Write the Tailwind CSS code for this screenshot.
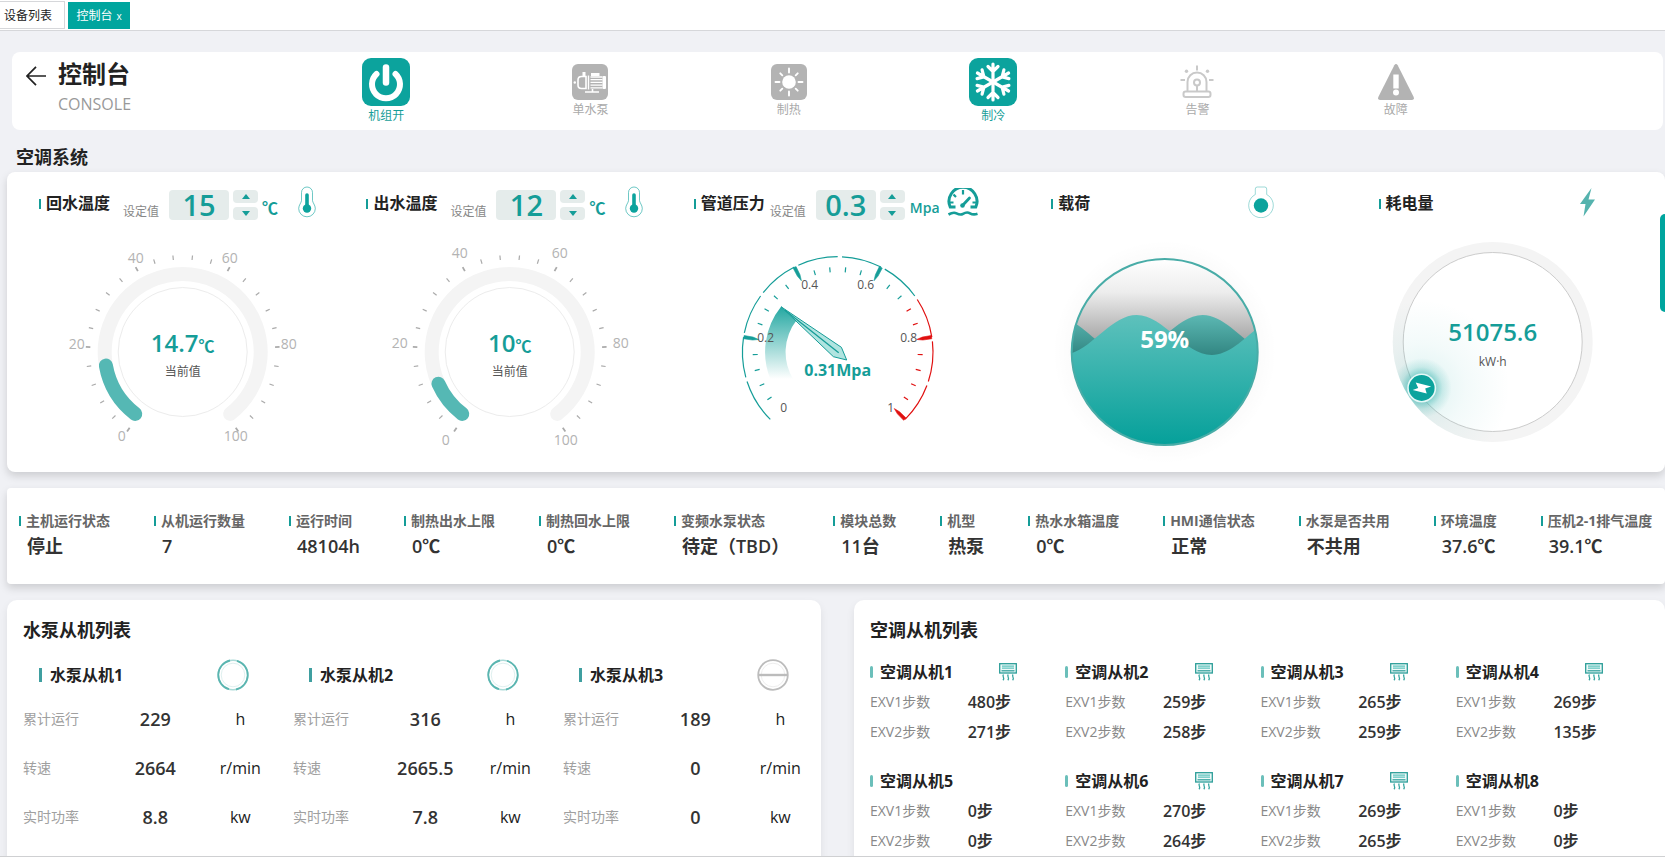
<!DOCTYPE html>
<html lang="zh-CN">
<head>
<meta charset="utf-8">
<meta name="viewport" content="width=device-width, initial-scale=1">
<title>控制台</title>
<script src="https://cdn.jsdelivr.net/npm/@tailwindcss/browser@4"></script>
</head>
<body class="flex h-screen flex-col overflow-hidden bg-[#f0f1f5] font-['Open_Sans','Noto_Sans_CJK_SC',sans-serif] text-[#222]">

<!-- Shared symbols -->
<svg class="hidden" aria-hidden="true">
  <symbol id="thermo" viewBox="0 0 18 32">
    <path d="M3.5 14.5V6.5a5.5 5.5 0 0 1 11 0v8c0 2 2.8 4.600 2.800 8a8.300 8.300 0 0 1-16.600 0c0-3.400 2.800-6 2.800-8z" fill="none" stroke="#0ca39d" stroke-opacity=".75" stroke-width=".8"/>
    <path d="M9 9v13" stroke="#0ca39d" stroke-width="3.600" stroke-linecap="round"/>
    <circle cx="9" cy="22.500" r="4.200" fill="#0ca39d"/>
  </symbol>
  <symbol id="up" viewBox="0 0 8 5"><path d="M4 0l4 5H0z" fill="#159d98"/></symbol>
  <symbol id="down" viewBox="0 0 8 5"><path d="M4 5l4-5H0z" fill="#159d98"/></symbol>
  <symbol id="ac" viewBox="0 0 18 18">
    <rect x=".7" y=".7" width="16.600" height="9.300" fill="#eef9f8" stroke="#2a9d98" stroke-width="1.300"/>
    <path d="M3 3.200h12M3 5.200h12" stroke="#5fc3bd" stroke-width="1.200"/>
    <path d="M2.500 7.800h13" stroke="#2a9d98" stroke-width="1.200"/>
    <path d="M4.500 11.500c-2 2 2 3-.5 5.800M9.300 11.500c-2 2 2 3-.5 5.800M14.100 11.500c-2 2 2 3-.5 5.800" fill="none" stroke="#36a5a0" stroke-width="1.300"/>
  </symbol>
  <symbol id="ring-on" viewBox="0 0 32 32">
    <circle cx="16" cy="16" r="14.800" fill="#fff" stroke="#a9d9d6" stroke-width="1.600"/>
    <path d="M13 1.500A14.800 14.800 0 0 0 12 30.200M19 30.500A14.800 14.800 0 0 0 20 1.800" fill="none" stroke="#5ab5b0" stroke-width="1.800"/>
    <circle cx="16" cy="16" r="11.800" fill="none" stroke="#dff0ef" stroke-width="1"/>
  </symbol>
  <symbol id="ring-off" viewBox="0 0 32 32">
    <circle cx="16" cy="16" r="14.800" fill="#fff" stroke="#bcbcbc" stroke-width="1.800"/>
    <circle cx="16" cy="16" r="11.800" fill="none" stroke="#eee" stroke-width="1"/>
    <path d="M1.500 16h29" stroke="#bcbcbc" stroke-width="2.400"/>
  </symbol>
</svg>

<nav class="flex h-[31px] shrink-0 items-start gap-[3px] border-b border-[#d6d7da] bg-white pt-px text-xs">
  <a href="#" class="flex h-7 w-[65px] items-center border border-l-0 border-[#d6d7da] pt-px pl-1 leading-4">设备列表</a>
  <a href="#" class="mt-px flex h-[27px] w-[62px] items-center justify-center gap-1 bg-[#00a59e] leading-4 text-white">控制台 <span class="text-[10px]">x</span></a>
</nav>

<main class="relative min-h-0 flex-1 overflow-hidden pt-[21px]">

  <header class="mr-0.5 ml-3 flex h-[78px] rounded-lg bg-white">
    <div class="flex w-[269px] shrink-0 pl-3.5 pt-1">
      <button type="button" aria-label="返回" class="mt-2.5 h-5 w-5">
        <svg viewBox="0 0 20 20" class="h-5 w-5"><path d="M20 10H1M10 .8L1 10l9 9.200" fill="none" stroke="#222" stroke-width="1.700"/></svg>
      </button>
      <div class="ml-3">
        <h1 class="text-2xl leading-9 font-bold">控制台</h1>
        <p class="text-base leading-6 text-[#999]">CONSOLE</p>
      </div>
    </div>
    <ul class="mr-[168px] flex flex-1 justify-around pt-1.5 text-xs leading-5 text-[#aaa]">
      <li class="flex w-12 flex-col items-center text-[#159d98]">
        <svg viewBox="0 0 48 48" class="h-12 w-12"><rect width="48" height="48" rx="9" fill="#0ca39d"/><path d="M14.500 16a14 14 0 1 0 19 0" fill="none" stroke="#fff" stroke-width="6" stroke-linecap="round"/><path d="M24 9.500v15" stroke="#fff" stroke-width="6.500" stroke-linecap="round"/></svg>
        机组开
      </li>
      <li class="flex w-9 flex-col items-center pt-1.5">
        <svg viewBox="0 0 36 36" class="h-9 w-9"><rect width="36" height="36" rx="6" fill="#b3b3b3"/><path d="M14 12.500H9.500C7.500 12.500 6 14 6 16v5c0 2 1.500 3.500 3.500 3.500H14z" fill="#b3b3b3" stroke="#fff" stroke-width="1.600"/><circle cx="2.800" cy="18.500" r="1.200" fill="#fff"/><path d="M12 8v4" stroke="#fff" stroke-width="3"/><path d="M16.500 11.500v14" stroke="#fff" stroke-width="1.400"/><rect x="19" y="9" width="8.500" height="3" fill="#fff"/><path d="M18.500 13h12M18.500 15.700h12M18.500 18.400h12M18.500 21.100h12M18.500 23.800h12" stroke="#fff" stroke-width="1.300"/><rect x="30.500" y="12" width="3.500" height="13" rx="1" fill="#fff"/><path d="M20.500 25v3M13 28h14" stroke="#fff" stroke-width="1.600"/></svg>
        单水泵
      </li>
      <li class="flex w-9 flex-col items-center pt-1.5">
        <svg viewBox="0 0 36 36" class="h-9 w-9"><rect width="36" height="36" rx="6" fill="#b3b3b3"/><circle cx="18" cy="18" r="6.800" fill="#fff"/><path d="M18 4.500v4M18 27.500v4M4.500 18h4M27.500 18h4M9.300 9.300l2 2M24.700 24.700l2 2M9.300 26.700l2-2M24.700 11.300l2-2" stroke="#fff" stroke-width="1.900" stroke-linecap="round"/></svg>
        制热
      </li>
      <li class="flex w-12 flex-col items-center text-[#159d98]">
        <svg viewBox="-24 -24 48 48" class="h-12 w-12"><rect x="-24" y="-24" width="48" height="48" rx="9" fill="#0ca39d"/><g id="flake" fill="none" stroke="#fff" stroke-width="3.200" stroke-linecap="round"></g></svg>
        制冷
      </li>
      <li class="flex w-9 flex-col items-center pt-1.5">
        <svg viewBox="0 0 36 36" class="h-9 w-9"><g fill="none" stroke="#c9c9c9" stroke-width="2"><path d="M8.500 27V18a9.500 9.500 0 0 1 19 0v9"/><rect x="4.500" y="27.500" width="27" height="5.500" rx="2.200"/><circle cx="18" cy="18.500" r="3"/><path d="M18 21.500V27M18 1.500V6.500M1.500 16H6M30 16h4.500"/></g><circle cx="7.500" cy="7.300" r="1.700" fill="#c9c9c9"/><circle cx="28.500" cy="7.300" r="1.700" fill="#c9c9c9"/></svg>
        告警
      </li>
      <li class="flex w-9 flex-col items-center pt-1.5">
        <svg viewBox="0 0 36 36" class="h-9 w-9"><path d="M16.300 1.200Q18-1 19.700 1.200L35.700 33Q36.500 36 34 36H2Q-.5 36 .3 33z" fill="#b3b3b3"/><path d="M15.300 10.500h5.400v14h-5.400z" fill="#fff"/><circle cx="18" cy="28.500" r="3" fill="#fff"/></svg>
        故障
      </li>
    </ul>
  </header>

  <h2 class="mt-3.5 ml-4 pb-0.5 text-lg leading-[26px] font-bold">空调系统</h2>

  <section class="ml-[7px] grid h-[300px] grid-cols-5 rounded-lg bg-white pt-[18px] pr-[9px] pl-3 shadow-[0_4px_8px_rgba(0,0,0,0.15)]">
    <!-- Return water -->
    <article>
      <div class="flex h-[30px] items-center pl-5">
        <i class="mb-0.5 h-2.5 w-0.5 bg-[#159d98]"></i>
        <h3 class="mb-1 ml-[5px] text-base leading-6 font-bold">回水温度</h3>
        <label for="set1" class="mt-3.5 ml-[13px] text-xs leading-4 text-[#888]">设定值</label>
        <input id="set1" value="15" class="ml-2.5 h-[30px] w-[60px] rounded bg-[#e5eceb] text-center text-[29px] leading-[30px] font-semibold text-[#159d98]">
        <span class="ml-1 flex flex-col gap-1">
          <button type="button" aria-label="增加" class="flex h-[13px] w-[25px] items-center justify-center rounded bg-[#e5eceb]"><svg class="h-[5px] w-2"><use href="#up"/></svg></button>
          <button type="button" aria-label="减少" class="flex h-[13px] w-[25px] items-center justify-center rounded bg-[#e5eceb]"><svg class="h-[5px] w-2"><use href="#down"/></svg></button>
        </span>
        <span class="mt-1.5 ml-1 text-base leading-5 font-bold text-[#159d98]">℃</span>
        <svg class="mb-1.5 ml-5 h-8 w-[18px]"><use href="#thermo"/></svg>
      </div>
      <svg viewBox="-160 -132 320 252" class="h-[252px] w-full" data-dial="190" data-labels="0,-61,84;20,-106,-8;40,-47,-94;60,47,-94;80,106,-8;100,53,84">
        <g class="dial"></g>
        <text y="0" text-anchor="middle" class="fill-[#159d98] text-2xl font-semibold">14.7<tspan class="text-base">℃</tspan></text>
        <text y="24" text-anchor="middle" class="fill-[#555] text-xs">当前值</text>
      </svg>
    </article>
    <!-- Outlet water -->
    <article>
      <div class="flex h-[30px] items-center pl-5">
        <i class="mb-0.5 h-2.5 w-0.5 bg-[#159d98]"></i>
        <h3 class="mb-1 ml-[5px] text-base leading-6 font-bold">出水温度</h3>
        <label for="set2" class="mt-3.5 ml-[13px] text-xs leading-4 text-[#888]">设定值</label>
        <input id="set2" value="12" class="ml-2.5 h-[30px] w-[60px] rounded bg-[#e5eceb] text-center text-[29px] leading-[30px] font-semibold text-[#159d98]">
        <span class="ml-1 flex flex-col gap-1">
          <button type="button" aria-label="增加" class="flex h-[13px] w-[25px] items-center justify-center rounded bg-[#e5eceb]"><svg class="h-[5px] w-2"><use href="#up"/></svg></button>
          <button type="button" aria-label="减少" class="flex h-[13px] w-[25px] items-center justify-center rounded bg-[#e5eceb]"><svg class="h-[5px] w-2"><use href="#down"/></svg></button>
        </span>
        <span class="mt-1.5 ml-1 text-base leading-5 font-bold text-[#159d98]">℃</span>
        <svg class="mb-1.5 ml-5 h-8 w-[18px]"><use href="#thermo"/></svg>
      </div>
      <svg viewBox="-160 -132 320 252" class="h-[252px] w-full" data-dial="204" data-labels="0,-64,88;20,-110,-9;40,-50,-99;60,50,-99;80,111,-9;100,56,88">
        <g class="dial"></g>
        <text y="0" text-anchor="middle" class="fill-[#159d98] text-2xl font-semibold">10<tspan class="text-base">℃</tspan></text>
        <text y="24" text-anchor="middle" class="fill-[#555] text-xs">当前值</text>
      </svg>
    </article>
    <!-- Pipe pressure -->
    <article>
      <div class="flex h-[30px] items-center pl-5">
        <i class="mb-0.5 h-2.5 w-0.5 bg-[#159d98]"></i>
        <h3 class="mb-1 ml-[5px] text-base leading-6 font-bold">管道压力</h3>
        <label for="set3" class="mt-3.5 ml-[5px] text-xs leading-4 text-[#888]">设定值</label>
        <input id="set3" value="0.3" class="ml-2.5 h-[30px] w-[60px] rounded bg-[#e5eceb] text-center text-[29px] leading-[30px] font-semibold text-[#159d98]">
        <span class="ml-1 flex flex-col gap-1">
          <button type="button" aria-label="增加" class="flex h-[13px] w-[25px] items-center justify-center rounded bg-[#e5eceb]"><svg class="h-[5px] w-2"><use href="#up"/></svg></button>
          <button type="button" aria-label="减少" class="flex h-[13px] w-[25px] items-center justify-center rounded bg-[#e5eceb]"><svg class="h-[5px] w-2"><use href="#down"/></svg></button>
        </span>
        <span class="mt-1.5 ml-[5px] text-sm leading-5 font-semibold text-[#159d98]">Mpa</span>
        <svg viewBox="0 0 32 28" class="mb-1.5 ml-[7px] h-7 w-8"><g fill="none" stroke="#159d98"><path d="M8.500 19H3.200A14 14 0 1 1 28.800 19H23.500" stroke-width="3"/><path d="M16 2v4.500M6.500 6.500l2.500 2.500M2 14.500h4.500M30 14.500h-4.500" stroke-width="2.200"/><path d="M15.500 17.500L22.500 10" stroke-width="2.800" stroke-linecap="round"/><path d="M1.500 26.500c3.500-2 5.500-2.500 8-1.200s4 2 6.500.5 4.500-2 7-.5 4.500 1.500 7.500.5" stroke-width="2.600"/></g><circle cx="15.500" cy="17.500" r="2.300" fill="#159d98"/></svg>
      </div>
      <svg viewBox="-160 -132 320 252" class="h-[252px] w-full">
        <defs><linearGradient id="band" gradientUnits="userSpaceOnUse" x1="0" y1="-46" x2="0" y2="27"><stop offset="0" stop-color="#22a7a1"/><stop offset="1" stop-color="#22a7a1" stop-opacity="0"/></linearGradient></defs>
        <path d="M-56.700-45.300A72.500 72.500 0 0 0-67 28L-44 28A52 52 0 0 1-41-32z" fill="url(#band)"/>
        <g id="pressure"></g>
        <path d="M-56.700-45.300L3.700-4.700 9 8-4.300 4.700z" fill="#b0e4e0" stroke="#159d98"/>
        <path d="M-53-42L1 .7" stroke="#159d98" stroke-width="1.300"/>
        <text y="24" text-anchor="middle" class="fill-[#159d98] text-base font-bold">0.31Mpa</text>
      </svg>
    </article>
    <!-- Load -->
    <article>
      <div class="flex h-[30px] items-center pr-[55px] pl-[50px]">
        <i class="mb-0.5 h-2.5 w-0.5 bg-[#159d98]"></i>
        <h3 class="mb-1 ml-[5px] text-base leading-6 font-bold">载荷</h3>
        <svg viewBox="0 0 26 32" class="mb-1.5 ml-auto h-8 w-[26px]"><path d="M7.300 8.500V3a2 2 0 0 1 2-2h7.400a2 2 0 0 1 2 2v5.500a12.300 12.300 0 1 1-11.400 0z" fill="none" stroke="#0ca39d" stroke-opacity=".5" stroke-width=".8"/><circle cx="13" cy="19.500" r="7.200" fill="#0ca39d"/></svg>
      </div>
      <svg viewBox="-160 -132 320 252" class="h-[252px] w-full">
        <defs>
          <clipPath id="ball"><circle r="93"/></clipPath>
          <radialGradient id="halo"><stop offset=".8" stop-color="#000" stop-opacity=".02"/><stop offset="1" stop-color="#000" stop-opacity="0"/></radialGradient>
          <linearGradient id="air" gradientUnits="userSpaceOnUse" x1="0" y1="-93" x2="0" y2="-10"><stop offset="0" stop-color="#fff"/><stop offset=".4" stop-color="#ededed"/><stop offset="1" stop-color="#a4a4a4"/></linearGradient>
          <linearGradient id="back" gradientUnits="userSpaceOnUse" x1="0" y1="-37" x2="0" y2="4"><stop offset="0" stop-color="#5cb8b3"/><stop offset="1" stop-color="#318581"/></linearGradient>
          <linearGradient id="front" gradientUnits="userSpaceOnUse" x1="0" y1="-37" x2="0" y2="93"><stop offset="0" stop-color="#5ec1bc"/><stop offset="1" stop-color="#05a09a"/></linearGradient>
        </defs>
        <circle r="112" fill="url(#halo)"/>
        <circle r="93" fill="url(#air)"/>
        <g clip-path="url(#ball)">
          <path d="M-112-37C-84.700-37-64.300 3-37 3S10.700-37 38-37 85.700 3 113 3V100H-112z" fill="url(#back)"/>
          <path d="M-103 3C-75.700 3-55.300-37-28-37S19.700 3 47 3 94.700-37 122-37V100H-103z" fill="url(#front)"/>
        </g>
        <circle r="93" fill="none" stroke="#48aca7" stroke-width="2"/>
        <text y="-4" text-anchor="middle" class="fill-white text-2xl font-bold">59%</text>
      </svg>
    </article>
    <!-- Energy -->
    <article>
      <div class="flex h-[30px] items-center pr-[55px] pl-[50px]">
        <i class="mb-0.5 h-2.5 w-0.5 bg-[#159d98]"></i>
        <h3 class="mb-1 ml-[5px] text-base leading-6 font-bold">耗电量</h3>
        <svg viewBox="0 0 28 30" class="mb-1.5 ml-auto h-[30px] w-7"><path d="M18.500 1L7 17h5.500L10.500 29.500 22 12.500h-6.500z" fill="#55b3ae"/></svg>
      </div>
      <svg viewBox="-160 -122 320 252" class="h-[252px] w-full">
        <defs>
          <clipPath id="disc"><circle r="100"/></clipPath>
          <radialGradient id="wide" gradientUnits="userSpaceOnUse" cx="-71" cy="46" r="88"><stop offset="0" stop-color="#0ca39d" stop-opacity=".14"/><stop offset=".5" stop-color="#0ca39d" stop-opacity=".05"/><stop offset="1" stop-color="#0ca39d" stop-opacity="0"/></radialGradient>
          <radialGradient id="near" gradientUnits="userSpaceOnUse" cx="-71" cy="46" r="30"><stop offset=".4" stop-color="#0ca39d" stop-opacity=".5"/><stop offset=".7" stop-color="#0ca39d" stop-opacity=".15"/><stop offset="1" stop-color="#0ca39d" stop-opacity="0"/></radialGradient>
        </defs>
        <circle r="100" fill="#f4f4f4"/>
        <circle r="89.500" fill="#fff" stroke="#ccc"/>
        <g clip-path="url(#disc)"><circle cx="-71" cy="46" r="88" fill="url(#wide)"/><circle cx="-71" cy="46" r="30" fill="url(#near)"/></g>
        <circle cx="-71" cy="46" r="13.700" fill="#0ca39d" stroke="#e6f8f7" stroke-width="1.600"/>
        <path d="M-77 40.500L-61.500 44.500-67.500 46.500-66 51.500-80 48-74.500 46z" fill="#fff"/>
        <text y="-1" text-anchor="middle" class="fill-[#159d98] text-2xl font-semibold">51075.6</text>
        <text y="24" text-anchor="middle" class="fill-[#555] text-xs">kW·h</text>
      </svg>
    </article>
  </section>

  <section id="stats" class="mt-4 ml-[7px] flex h-24 gap-11 overflow-hidden rounded bg-white pt-[21px] pl-3 whitespace-nowrap shadow-[0_4px_8px_rgba(0,0,0,0.15)]"></section>

  <div class="mt-4 ml-[7px] grid grid-cols-[814fr_811fr] gap-[33px]">
    <section class="h-[300px] rounded-[10px] bg-white pt-[15px] pl-4 shadow-[0_4px_8px_rgba(0,0,0,0.08)]">
      <h2 class="text-lg leading-[30px] font-bold">水泵从机列表</h2>
      <div id="pumps" class="mr-[-12px] grid grid-cols-3"></div>
    </section>
    <section class="h-[300px] rounded-[10px] bg-white pt-[15px] pl-4 shadow-[0_4px_8px_rgba(0,0,0,0.08)]">
      <h2 class="text-lg leading-[30px] font-bold">空调从机列表</h2>
      <div id="units" class="mr-3.5 grid grid-cols-4 pt-[15px]"></div>
    </section>
  </div>

  <button type="button" aria-label="展开侧栏" class="absolute top-[183px] right-0 h-[98px] w-[5px] rounded-l-lg bg-[#00a59e]"></button>
</main>
<footer class="h-0.5 shrink-0 border-t border-[#cfd0d2] bg-white"></footer>

<script>
const polar = (r, deg) => {
  const a = deg * Math.PI / 180;
  return [(r * Math.cos(a)).toFixed(2), (-r * Math.sin(a)).toFixed(2)];
};
const arc = (r, from, to) =>
  `M${polar(r, from)}A${r} ${r} 0 ${from - to > 180 ? 1 : 0} 1 ${polar(r, to)}`;

// Snowflake: six identical arms
document.getElementById('flake').innerHTML = [0, 60, 120, 180, 240, 300].map(a =>
  `<path d="M0 0V-18M-5-15.500L0-10.500 5-15.500" transform="rotate(${a})"/>`).join('');

// Temperature dials
document.querySelectorAll('[data-dial]').forEach(svg => {
  let h = `<path d="${arc(78, 232.5, -52.5)}" fill="none" stroke="#f4f4f4" stroke-width="14" stroke-linecap="round"/>
    <path d="${arc(78, 232.5, +svg.dataset.dial)}" fill="none" stroke="#55b8b4" stroke-width="14" stroke-linecap="round"/>
    <circle r="64.500" fill="none" stroke="#ececec"/>`;
  for (let i = 0; i <= 25; i++) {
    const a = 235 - i * 11.6;
    h += `<path d="M${polar(92.5, a)}L${polar(97, a)}" stroke="#aaa" stroke-width="${i % 5 ? 1.2 : 1.8}"/>`;
  }
  svg.dataset.labels.split(';').forEach(l => {
    const [t, x, y] = l.split(',');
    h += `<text x="${x}" y="${+y + 5}" text-anchor="middle" class="fill-[#b3b3b3] text-sm">${t}</text>`;
  });
  svg.querySelector('.dial').innerHTML = h;
});

// Pressure gauge
{
  let h = '';
  const teal = '#159d98', red = '#e01010';
  for (let i = 0; i < 10; i++) {
    const a = 225 - i * 27;
    h += `<path d="${arc(95.3, a - (i ? 2.6 : 0), a - 27)}" fill="none" stroke="${i < 7 ? teal : red}" stroke-width="1.200"/>`;
  }
  for (let i = 1; i <= 25; i++) {
    const a = 225 - i * 10.8, c = a > 36 ? teal : red;
    if (i % 5) h += `<path d="M${polar(80, a)}L${polar(85, a)}" stroke="${c}" stroke-width="1.200"/>`;
    else h += `<path d="M${polar(95, a - 1)}L${polar(95, a + 1)}L${polar(86, a + 1)}L${polar(80, a)}L${polar(86, a - 1)}z" fill="${c}" stroke="${c}" stroke-width=".6"/>`;
  }
  [['0', -54, 56], ['0.2', -72, -14], ['0.4', -28, -67], ['0.6', 28, -67], ['0.8', 71, -14], ['1', 53, 56]].forEach(([t, x, y]) => {
    h += `<text x="${x}" y="${y + 4}" text-anchor="middle" class="fill-[#555] text-xs">${t}</text>`;
  });
  document.getElementById('pressure').innerHTML = h;
}

// Status strip
document.getElementById('stats').innerHTML = [
  ['主机运行状态', '停止'], ['从机运行数量', '7'], ['运行时间', '48104h'], ['制热出水上限', '0℃'], ['制热回水上限', '0℃'],
  ['变频水泵状态', '待定（TBD）'], ['模块总数', '11台'], ['机型', '热泵'], ['热水水箱温度', '0℃'], ['HMI通信状态', '正常'],
  ['水泵是否共用', '不共用'], ['环境温度', '37.6℃'], ['压机2-1排气温度', '39.1℃']
].map(([k, v]) => `<dl class="shrink-0">
  <dt class="flex items-center gap-[5px] text-sm leading-6 font-bold text-[#666]"><i class="h-2.5 w-0.5 bg-[#159d98]"></i>${k}</dt>
  <dd class="pl-2 text-lg leading-[26px] font-semibold text-[#333]">${v}</dd></dl>`).join('');

// Pump slaves
document.getElementById('pumps').innerHTML = [
  ['水泵从机1', '#ring-on', '229', '2664', '8.8'],
  ['水泵从机2', '#ring-on', '316', '2665.5', '7.8'],
  ['水泵从机3', '#ring-off', '189', '0', '0']
].map(([n, ic, a, b, c]) => `<article class="pt-3.5">
  <div class="flex h-8 items-center pr-11 pl-4"><i class="h-3.5 w-[3px] bg-[#3f9fa0]"></i>
    <h3 class="ml-2 text-base leading-6 font-bold">${n}</h3>
    <svg class="ml-auto h-8 w-8"><use href="${ic}"/></svg></div>
  <table class="mt-[3px] w-full table-fixed">
    <colgroup><col class="w-[33%]"><col class="w-[32%]"><col class="w-[31%]"><col></colgroup>
    ${[['累计运行', a, 'h'], ['转速', b, 'r/min'], ['实时功率', c, 'kw']].map(([k, v, u]) => `<tr class="h-[49px]">
      <th scope="row" class="text-left text-sm leading-5 font-normal text-[#a0a0a0]">${k}</th>
      <td class="text-center text-lg leading-6 font-semibold text-[#333]">${v}</td>
      <td class="text-center text-base leading-6">${u}</td><td></td></tr>`).join('')}
  </table></article>`).join('');

// Air conditioner slaves
document.getElementById('units').innerHTML = [
  ['1', 1, '480', '271'], ['2', 1, '259', '258'], ['3', 1, '265', '259'], ['4', 1, '269', '135'],
  ['5', 0, '0', '0'], ['6', 1, '270', '264'], ['7', 1, '269', '265'], ['8', 0, '0', '0']
].map(([n, on, a, b]) => `<article class="h-[109px]">
  <div class="flex h-6 items-center pr-12"><i class="h-3 w-[3px] rounded-sm bg-[#6bbfba]"></i>
    <h3 class="ml-[7px] text-base leading-6 font-bold">空调从机${n}</h3>
    ${on ? '<svg class="ml-auto h-[18px] w-[18px]"><use href="#ac"/></svg>' : ''}</div>
  <table class="mt-[3px] w-full table-fixed">
    ${[['EXV1步数', a], ['EXV2步数', b]].map(([k, v]) => `<tr class="h-[30px]">
      <th scope="row" class="w-1/2 text-left text-sm leading-5 font-normal text-[#888]">${k}</th>
      <td class="text-base leading-6 font-semibold text-[#333]">${v}步</td></tr>`).join('')}
  </table></article>`).join('');
</script>
</body>
</html>
